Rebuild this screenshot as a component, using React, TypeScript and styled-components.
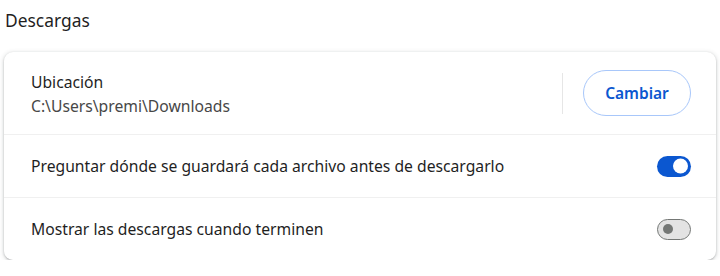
import React, {useState} from 'react';
import styled, {createGlobalStyle} from 'styled-components';

const GlobalStyle = createGlobalStyle`
  body {
    margin: 0;
    background: #ffffff;
    font-family: "Noto Sans", "Open Sans", sans-serif;
    color: #1f1f1f;
  }
`;

type ToggleProps = {
    checked: boolean
    onChange: () => void
}

const Toggle = ({checked, onChange}: ToggleProps) => {
    return (
        <Track $on={checked} onClick={onChange} role="switch" aria-checked={checked}>
            <Knob $on={checked}/>
        </Track>
    );
};

export default function App() {
    const [ask, setAsk] = useState(true);
    const [show, setShow] = useState(false);

    return (
        <Page>
            <GlobalStyle/>
            <Title>Descargas</Title>
            <Card>
                <LocationRow>
                    <Texts>
                        <Label>Ubicación</Label>
                        <SubLabel>C:\Users\premi\Downloads</SubLabel>
                    </Texts>
                    <Divider/>
                    <OutlineButton>Cambiar</OutlineButton>
                </LocationRow>
                <Row>
                    <Label>Preguntar dónde se guardará cada archivo antes de descargarlo</Label>
                    <Toggle checked={ask} onChange={() => setAsk(!ask)}/>
                </Row>
                <Row>
                    <Label>Mostrar las descargas cuando terminen</Label>
                    <Toggle checked={show} onChange={() => setShow(!show)}/>
                </Row>
            </Card>
        </Page>
    );
}

const Page = styled.div`
  padding: 7px 4px 0 4px;
  width: 712px;
`

const Title = styled.h2`
  margin: 0 0 0 1px;
  font-size: 17.4px;
  font-weight: 400;
  line-height: 26px;
  color: #1f1f1f;
`

const Card = styled.div`
  margin-top: 19px;
  background: #ffffff;
  border-radius: 9px;
  box-shadow: 0 1px 2px rgba(60, 64, 67, 0.3), 0 1px 4px 1px rgba(60, 64, 67, 0.15);
`

const Row = styled.div`
  display: flex;
  align-items: center;
  justify-content: space-between;
  height: 63px;
  padding: 0 25px 0 27px;
  border-top: 1px solid #f0f0f0;
  box-sizing: border-box;
`

const LocationRow = styled(Row)`
  height: 82px;
  border-top: none;
`

const Texts = styled.div`
  display: flex;
  flex-direction: column;
  gap: 2px;
  padding-top: 2px;
  flex: 1;
`

const Label = styled.div`
  font-size: 15.7px;
  line-height: 22px;
  color: #1f1f1f;
`

const SubLabel = styled.div`
  font-size: 15.7px;
  line-height: 22px;
  color: #474747;
`

const Divider = styled.div`
  width: 1px;
  height: 41px;
  background: #e6e6e6;
  margin-right: 20px;
`

const OutlineButton = styled.button`
  height: 46px;
  width: 108px;
  border-radius: 23px;
  border: 1px solid #a8c7fa;
  background: #ffffff;
  color: #0b57d0;
  font-family: "Noto Sans", "Open Sans", sans-serif;
  font-size: 15.5px;
  font-weight: 600;
  cursor: pointer;
`

const Track = styled.div<{ $on: boolean }>`
  position: relative;
  width: 34px;
  height: 21px;
  border-radius: 11px;
  box-sizing: border-box;
  background: ${p => p.$on ? '#0b57d0' : '#e3e3e3'};
  border: ${p => p.$on ? 'none' : '1px solid #747775'};
  cursor: pointer;
  flex-shrink: 0;
`

const Knob = styled.div<{ $on: boolean }>`
  position: absolute;
  top: 50%;
  transform: translateY(-50%);
  border-radius: 50%;
  background: ${p => p.$on ? '#ffffff' : '#747775'};
  width: ${p => p.$on ? '15px' : '10px'};
  height: ${p => p.$on ? '15px' : '10px'};
  ${p => p.$on ? 'right: 3px;' : 'left: 5px;'}
`
